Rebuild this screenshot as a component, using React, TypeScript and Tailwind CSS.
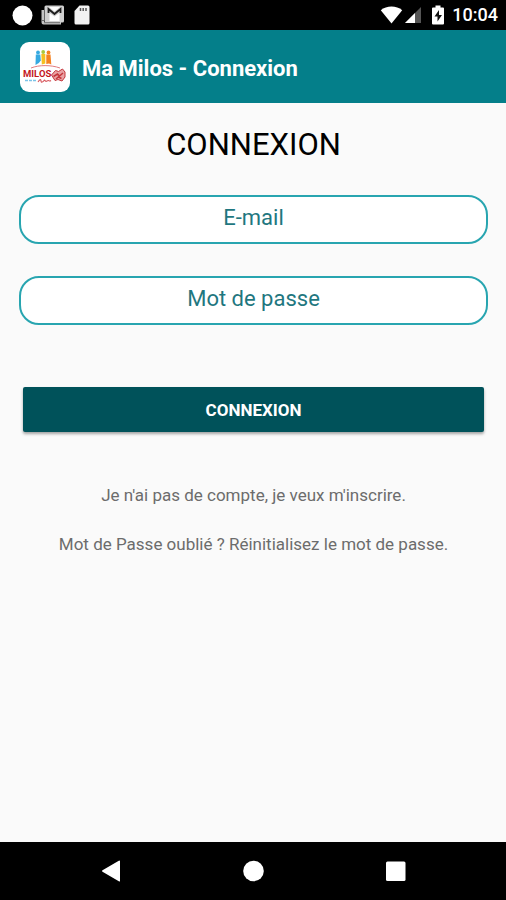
import type { ReactNode } from 'react';

function StatusBar() {
  return (
    <div className="flex h-[30px] items-center justify-between bg-black pl-3 pr-2 text-white">
      <div className="flex items-center gap-2">
        <svg width="21" height="21" viewBox="0 0 21 21" aria-hidden="true">
          <circle cx="10.5" cy="10.5" r="10" fill="#fff" />
        </svg>
        <svg width="24" height="20" viewBox="0 0 24 20" aria-hidden="true">
          <path d="M0.5 5v12.5a2 2 0 0 0 2 2H20V17H3V5z" fill="#c4c4c4" />
          <rect x="3.5" y="0.5" width="19.5" height="17" rx="1.5" fill="#d0d0d0" />
          <path d="M8.5 8l5 3.500 5-3.500v8h-10z" fill="#fff" />
          <path d="M8 2h11l-5.500 4.500z" fill="#fff" />
          <path d="M7.500 8V4l6 5 6-5v4" fill="none" stroke="#1c1c1c" strokeWidth="1.800" />
          <path d="M1 15.500h2.500M3 17.700h16" stroke="#555" strokeWidth="0.800" />
        </svg>
        <svg width="18" height="20" viewBox="0 0 18 20" aria-hidden="true">
          <path d="M6.500 0.500H15a1.500 1.500 0 0 1 1.500 1.500v16a1.500 1.500 0 0 1-1.500 1.500H3A1.500 1.500 0 0 1 1.500 18V6z" fill="#f2f2f2" />
          <path d="M7.500 3v3M10.200 3v3M13 3v3" stroke="#555" strokeWidth="1.500" />
        </svg>
      </div>
      <div className="flex items-center">
        <svg width="23" height="18" viewBox="0 0 23 18" aria-hidden="true">
          <path d="M11.500 17.500L0.800 4.200C6.500-.6 16.500-.6 22.200 4.200z" fill="#fff" />
        </svg>
        <svg className="ml-px" width="18" height="18" viewBox="0 0 18 18" aria-hidden="true">
          <path d="M17 1v16H1z" fill="#555" />
          <path d="M11 7v10H1z" fill="#fff" />
        </svg>
        <svg className="ml-2" width="16" height="20" viewBox="0 0 16 20" aria-hidden="true">
          <path d="M5.500 0.500h5v2H13a1 1 0 0 1 1 1v15a1 1 0 0 1-1 1H3a1 1 0 0 1-1-1v-15a1 1 0 0 1 1-1h2.500z" fill="#fff" />
          <path d="M9 5L4.500 11.500H7.500V16.500L12 10H9z" fill="#111" />
        </svg>
        <span className="ml-1.5 text-lg font-medium">10:04</span>
      </div>
    </div>
  );
}

function Logo() {
  return (
    <svg width="50" height="50" viewBox="0 0 50 50" role="img" aria-label="Milos">
      <rect width="50" height="50" rx="9" fill="#fff" />
      <circle cx="18" cy="10.500" r="1.900" fill="#36a9e1" />
      <path d="M15.800 12.500h4.500l.5 6-2 2.500-3.300 2z" fill="#36a9e1" />
      <circle cx="23.200" cy="10" r="1.900" fill="#a8c83f" />
      <path d="M21.300 12h4v9.500l-3.500 1z" fill="#f5c021" />
      <circle cx="28.500" cy="10.500" r="1.900" fill="#f58220" />
      <path d="M26.300 12.500h4.200l.8 10-2.300-1-2.700.5z" fill="#f58220" />
      <path d="M11 26C19 22.800 31 22.800 40 26" fill="none" stroke="#dc6a6e" strokeWidth="0.900" />
      <text x="3" y="35" fill="#c4161c" fontFamily="Roboto, sans-serif" fontSize="9.500" fontWeight="700">MILOS</text>
      <path d="M31.500 33l4-4.500 3 1 4-2.500 2.500 3v5l-3 4-4-1.500-3 1z" fill="#e9a3a6" stroke="#c4363c" strokeWidth="1" />
      <path d="M33.500 34.500l4-2.500 2 2 3.500-3M36 37l2.500-2 3 1.500" fill="none" stroke="#c4363c" strokeWidth="1.500" />
      <path d="M5 38.500h12" stroke="#7cc4e8" strokeWidth="1.400" strokeDasharray="3 1" />
      <path d="M18 40c2-3 3-3 3-1s2 1 3-.5 1 2 3 .5 2 1 4-.500" fill="none" stroke="#d8575d" strokeWidth="1.100" />
    </svg>
  );
}

function Field({ type, label }: { type: string; label: string }) {
  return (
    <input
      type={type}
      aria-label={label}
      placeholder={label}
      className="block h-[49px] w-full rounded-[20px] border-2 border-[#28a5b0] bg-white px-4 pb-1 text-center text-[22px] text-[#00525a] outline-none placeholder:text-[#1f7780]"
    />
  );
}

function NavButton({ label, children }: { label: string; children: ReactNode }) {
  return (
    <button type="button" aria-label={label} className="flex items-center justify-center">
      <svg width="22" height="22" viewBox="0 0 22 22" fill="#fff" aria-hidden="true">
        {children}
      </svg>
    </button>
  );
}

export default function App() {
  return (
    <div className="flex min-h-screen flex-col bg-[#fafafa] font-['Roboto',sans-serif]">
      <StatusBar />
      <header className="flex h-[73px] items-center gap-3 bg-[#047f8a] px-5">
        <Logo />
        <span className="pt-1 text-[22px] font-bold text-white">Ma Milos - Connexion</span>
      </header>

      <main className="flex-1 pl-[19px] pr-[18px] pt-[22px]">
        <h1 className="text-center text-[31px] leading-10 text-black">CONNEXION</h1>
        <form className="mt-[30px]" onSubmit={(e) => e.preventDefault()}>
          <div className="flex flex-col gap-8">
            <Field type="email" label="E-mail" />
            <Field type="password" label="Mot de passe" />
          </div>
          <div className="mt-[62px] px-1">
            <button
              type="submit"
              className="block h-[45px] w-full rounded-xs bg-[#00525a] pt-0.5 text-[17px] font-bold text-white shadow-[0_2px_3px_rgba(0,0,0,0.35)]"
            >
              CONNEXION
            </button>
          </div>
        </form>
        <div className="mt-[51px] flex flex-col items-center gap-[25px] text-[17px] leading-6 text-[#6c6c6c]">
          <a href="#inscription">Je n'ai pas de compte, je veux m'inscrire.</a>
          <a href="#mot-de-passe">Mot de Passe oublié ? Réinitialisez le mot de passe.</a>
        </div>
      </main>

      <nav className="grid h-[58px] grid-cols-3 bg-black px-10">
        <NavButton label="Retour">
          <path d="M20 1v20a.8.800 0 0 1-1.200.300L2.500 11.700a.8.800 0 0 1 0-1.400L18.800.700a.8.800 0 0 1 1.200.300z" />
        </NavButton>
        <NavButton label="Accueil">
          <circle cx="11.500" cy="11" r="10.300" />
        </NavButton>
        <NavButton label="Applications récentes">
          <rect x="2" y="1.500" width="19.500" height="19.500" rx="1.500" />
        </NavButton>
      </nav>
    </div>
  );
}
